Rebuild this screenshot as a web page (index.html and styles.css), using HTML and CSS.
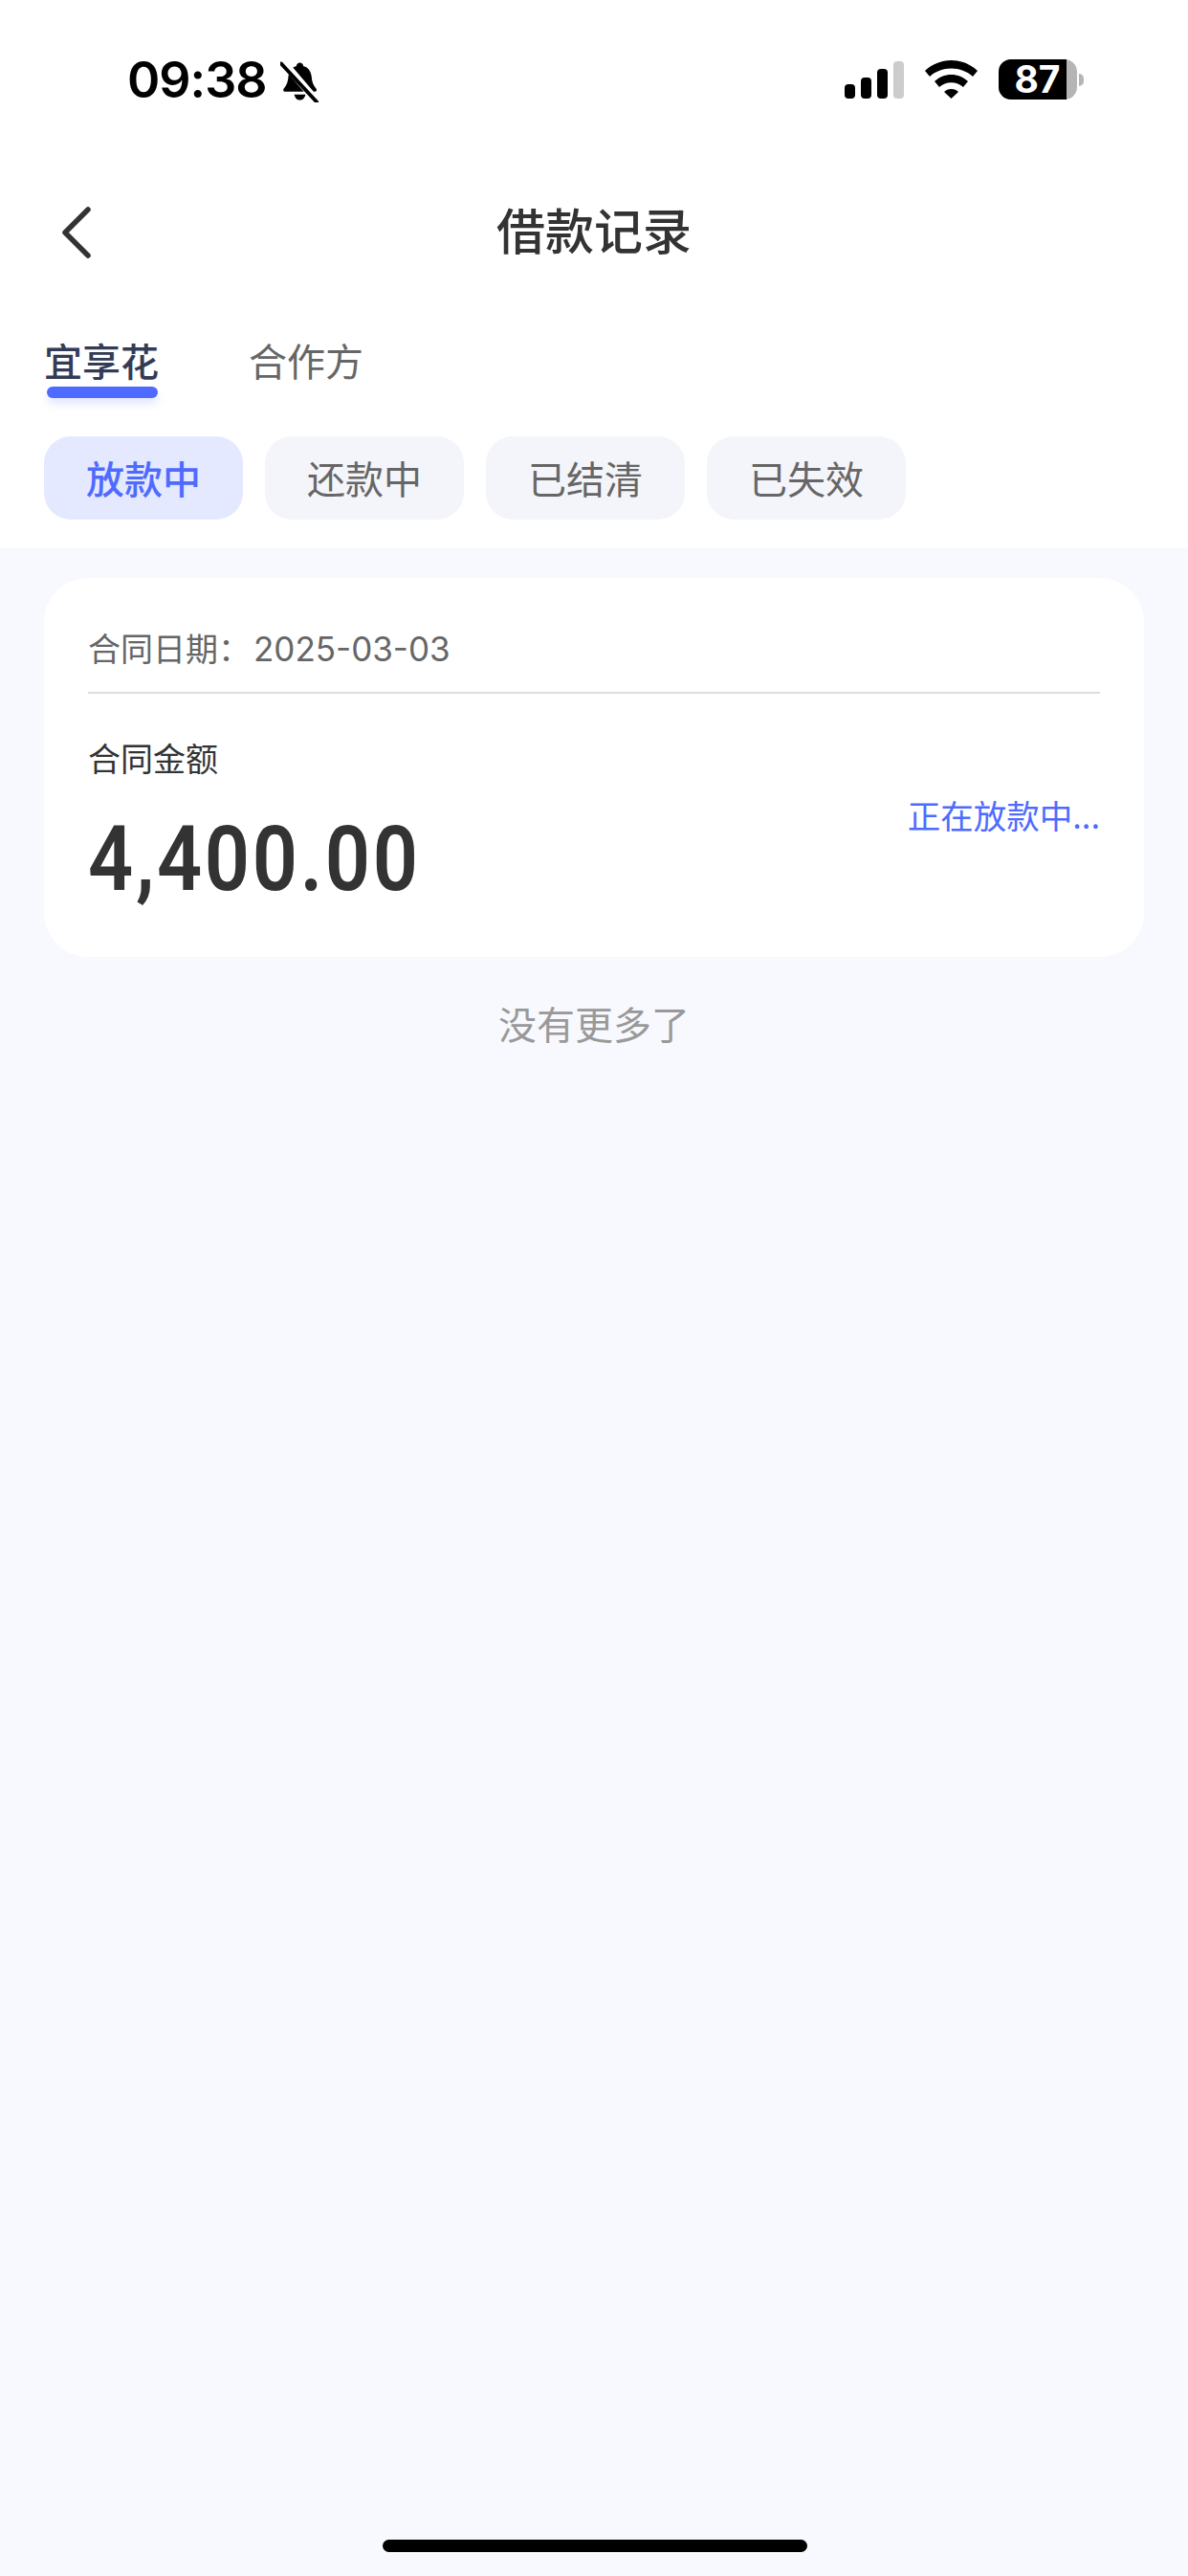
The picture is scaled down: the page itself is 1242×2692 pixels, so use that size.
FILE: index.html
```html
<!DOCTYPE html>
<html>

<head>
  <link rel="stylesheet" href="styles.css">
</head>

<body>
  <div class="page">
    <div class="top">
      <div class="status-bar">
        <div class="status-left">
          <span class="time">09:38</span>
          <svg class="bell" width="41" height="44" viewBox="0 0 42 44">
            <path d="M21 2c2 0 3.500 1.500 3.700 3.500 5.500 1.500 8.300 6 8.800 11.500.400 5 1.500 9 5 13 1 1.200.300 3-1.300 3H5c-1.600 0-2.300-1.800-1.300-3 3.500-4 4.600-8 5-13 .500-5.500 3.300-10 8.600-11.500C17.500 3.500 19 2 21 2z" />
            <path d="M15 36h12c-.500 3.500-3 6-6 6s-5.500-2.500-6-6z" />
            <path class="bell-gap" d="M3 1l36 42" />
            <path class="bell-slash" d="M1 3l38 41" />
          </svg>
        </div>
        <div class="status-right">
          <div class="signal">
            <span class="bar bar-1"></span>
            <span class="bar bar-2"></span>
            <span class="bar bar-3"></span>
            <span class="bar bar-4"></span>
          </div>
          <svg class="wifi" width="55" height="40" viewBox="0 0 55 40">
            <path d="M27.500 0C38 0 47.500 4 55 11l-5 6C44 11.500 36 8.500 27.500 8.500S11 11.500 5 17L0 11C7.500 4 17 0 27.500 0z" />
            <path d="M27.500 15c6.500 0 12.500 2.500 17.500 7l-5 6c-3.500-3-7.800-4.800-12.500-4.800S18.500 25 15 28l-5-6c5-4.500 11-7 17.500-7z" />
            <path d="M27.500 30c3 0 5.500 1 7.500 3L27.500 40 20 33c2-2 4.500-3 7.500-3z" />
          </svg>
          <div class="battery">
            <div class="battery-body">
              <div class="battery-level">87</div>
            </div>
            <span class="battery-nub"></span>
          </div>
        </div>
      </div>

      <div class="nav">
        <svg class="back" width="36" height="58" viewBox="0 0 36 58">
          <path d="M30 5L6 29l24 24" />
        </svg>
        <div class="nav-title">借款记录</div>
      </div>

      <div class="tabs">
        <div class="tab tab-active">
          <span>宜享花</span>
          <span class="tab-line"></span>
        </div>
        <div class="tab">
          <span>合作方</span>
        </div>
      </div>

      <div class="chips">
        <div class="chip chip-active">放款中</div>
        <div class="chip">还款中</div>
        <div class="chip">已结清</div>
        <div class="chip">已失效</div>
      </div>
    </div>

    <div class="list">
      <div class="card">
        <div class="card-date">合同日期：<span class="date-num">2025-03-03</span></div>
        <div class="card-body">
          <div>
            <div class="amount-label">合同金额</div>
            <div class="amount">4,400.00</div>
          </div>
          <div class="card-status">正在放款中...</div>
        </div>
      </div>
      <div class="no-more">没有更多了</div>
    </div>

    <div class="home-indicator"></div>
  </div>
</body>

</html>
```

FILE: styles.css
```css
body {
  margin: 0;
  font-family: "Noto Sans CJK SC", "Noto Sans", sans-serif;
}

.page {
  position: relative;
  width: 1242px;
  height: 2692px;
  overflow: hidden;
  background-color: #f8f9fe;
}

.top {
  background-color: #ffffff;
  padding-bottom: 30px;
}

.status-bar {
  display: flex;
  justify-content: space-between;
  height: 170px;
  box-sizing: border-box;
  padding: 62px 109px 0 133px;
}

.status-left {
  display: flex;
  align-items: flex-start;
  gap: 14px;
}

.time {
  font-family: Inter, sans-serif;
  font-size: 52px;
  font-weight: 600;
  line-height: 44px;
  letter-spacing: -1px;
  color: #000000;
}

.bell {
  margin-top: 1px;
  fill: #000000;
}

.bell-gap {
  fill: none;
  stroke: #ffffff;
  stroke-width: 8;
}

.bell-slash {
  fill: none;
  stroke: #000000;
  stroke-width: 4;
  stroke-linecap: round;
}

.status-right {
  display: flex;
  align-items: flex-start;
  gap: 22px;
}

.signal {
  display: flex;
  align-items: flex-end;
  gap: 6px;
  height: 41px;
}

.bar {
  width: 11px;
  border-radius: 4px;
  background-color: #000000;
}

.bar-1 {
  height: 15px;
}

.bar-2 {
  height: 22px;
}

.bar-3 {
  height: 31px;
}

.bar-4 {
  height: 39px;
  background-color: #cccccc;
}

.wifi {
  margin-top: 1px;
  fill: #000000;
}

.battery {
  display: flex;
  align-items: center;
  gap: 2px;
  height: 42px;
}

.battery-body {
  width: 82px;
  height: 42px;
  border-radius: 13px;
  background-color: #b5b5b5;
}

.battery-level {
  width: 71px;
  height: 42px;
  box-sizing: border-box;
  padding-left: 10px;
  border-radius: 13px 0 0 13px;
  background-color: #000000;
  color: #ffffff;
  font-family: Inter, sans-serif;
  font-size: 39px;
  font-weight: 700;
  line-height: 42px;
  text-align: center;
}

.battery-nub {
  width: 5px;
  height: 13px;
  border-radius: 0 6px 6px 0;
  background-color: #b5b5b5;
}

.nav {
  position: relative;
  display: flex;
  align-items: center;
  justify-content: center;
  height: 146px;
}

.back {
  position: absolute;
  left: 62px;
  top: 44px;
  fill: none;
  stroke: #333333;
  stroke-width: 5.500;
  stroke-linecap: round;
  stroke-linejoin: round;
}

.nav-title {
  padding-bottom: 8px;
  font-size: 51px;
  font-weight: 500;
  color: #333333;
}

.tabs {
  display: flex;
  gap: 94px;
  padding: 35px 46px 0;
  height: 66px;
}

.tab {
  display: flex;
  flex-direction: column;
  font-size: 40px;
  line-height: 50px;
  color: #666666;
}

.tab-active {
  font-weight: 500;
  color: #333c57;
}

.tab-line {
  width: 116px;
  height: 12px;
  margin: 3px 0 0 3px;
  border-radius: 6px;
  background-color: #4f6bff;
  box-shadow: 0 6px 8px rgba(79, 107, 255, 0.16);
}

.chips {
  display: flex;
  gap: 23px;
  padding: 39px 46px 0;
}

.chip {
  width: 208px;
  height: 87px;
  border-radius: 28px;
  background-color: #f4f5fa;
  color: #666666;
  font-size: 40px;
  line-height: 87px;
  text-align: center;
}

.chip-active {
  background-color: #e4e9ff;
  color: #4f6bff;
  font-weight: 500;
}

.list {
  padding: 31px 46px 0;
}

.card {
  height: 396px;
  box-sizing: border-box;
  padding: 49px 46px 0 46px;
  border-radius: 46px;
  background-color: #ffffff;
}

.card-date {
  padding-bottom: 21px;
  border-bottom: 2px solid #dddddd;
  font-size: 34px;
  line-height: 48px;
  color: #666666;
}

.date-num {
  margin-left: 3px;
  font-family: Inter, sans-serif;
  font-size: 35px;
}

.card-body {
  display: flex;
  justify-content: space-between;
  padding-top: 43px;
}

.amount-label {
  font-size: 34px;
  line-height: 48px;
  color: #333333;
}

.amount {
  margin-top: 32px;
  font-family: Roboto, sans-serif;
  font-size: 94px;
  font-weight: 600;
  line-height: 100px;
  letter-spacing: 3px;
  color: #333333;
  transform: scaleX(0.88);
  transform-origin: left center;
}

.card-status {
  margin-top: 59px;
  font-size: 34.500px;
  line-height: 48px;
  color: #4f6bff;
}

.no-more {
  margin-top: 41px;
  font-size: 40px;
  line-height: 56px;
  text-align: center;
  color: #999999;
}

.home-indicator {
  position: absolute;
  left: 400px;
  bottom: 25px;
  width: 444px;
  height: 13px;
  border-radius: 7px;
  background-color: #000000;
}
```
